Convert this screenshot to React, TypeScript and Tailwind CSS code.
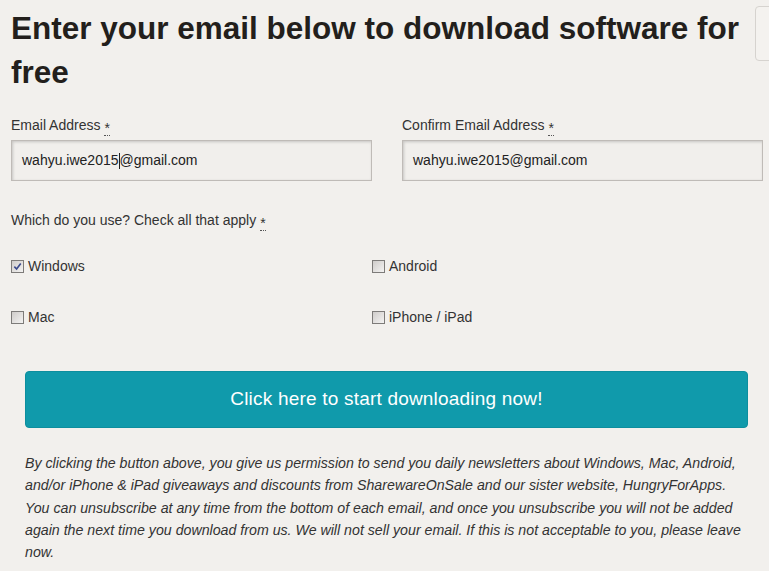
import React from 'react';

const Req: React.FC = () => (
  <abbr className="no-underline border-b border-dotted border-[#555] leading-none">*</abbr>
);

const Check: React.FC<{ checked?: boolean; label: string }> = ({ checked, label }) => (
  <label className="flex items-center gap-[4px] text-[14px] text-[#333]">
    <span className="w-[13px] h-[13px] border border-[#7d7b79] bg-gradient-to-br from-[#cfccca] to-[#f4f3f2] flex items-center justify-center">
      {checked && (
        <svg viewBox="0 0 10 10" className="w-[9px] h-[9px]">
          <path d="M1.5 5.2 L4 7.8 L8.6 1.6" fill="none" stroke="#3b4a8c" strokeWidth="1.8" />
        </svg>
      )}
    </span>
    {label}
  </label>
);

const Field: React.FC<{ label: string; value: string; caret?: number }> = ({ label, value, caret }) => (
  <div className="flex flex-col">
    <div className="text-[14px] text-[#333] h-[22px] flex items-end gap-[4px]">
      {label} <Req />
    </div>
    <div className="mt-[4px] h-[41px] border border-[#bfbbb7] bg-[#f1efec] shadow-[inset_1px_1px_3px_rgba(0,0,0,0.18)] flex items-center px-[10px] text-[14px] text-[#222]">
      {caret !== undefined ? (
        <>
          {value.slice(0, caret)}
          <span className="inline-block w-px h-[16px] bg-[#222]" />
          {value.slice(caret)}
        </>
      ) : (
        value
      )}
    </div>
  </div>
);

const App: React.FC = () => {
  return (
    <div className="w-[769px] h-[571px] overflow-hidden bg-[#f2f0ed] relative font-['Liberation_Sans',Arial,sans-serif]">
      <div className="absolute left-[755px] top-[6px] w-[30px] h-[55px] border border-[#d6d3cf] rounded-[4px] bg-[#f4f2ef]" />
      <div className="pl-[11px] pr-[7px]">
        <h1 className="pt-[6px] text-[31.5px] leading-[44px] font-bold text-[#231f1c] whitespace-nowrap">
          Enter your email below to download software for
          <br />
          free
        </h1>
        <div className="mt-[20px] grid grid-cols-[361px_361px] gap-x-[30px]">
          <Field label="Email Address" value="wahyu.iwe2015@gmail.com" caret={13} />
          <Field label="Confirm Email Address" value="wahyu.iwe2015@gmail.com" />
        </div>
        <div className="mt-[29px] text-[14px] text-[#333] flex items-end gap-[4px]">
          Which do you use? Check all that apply <Req />
        </div>
        <div className="mt-[25px] grid grid-cols-[361px_361px] gap-y-[30px]">
          <Check checked label="Windows" />
          <Check label="Android" />
          <Check label="Mac" />
          <Check label="iPhone / iPad" />
        </div>
      </div>
      <div className="pl-[25px] pr-[21px] mt-[43px]">
        <button className="w-full h-[57px] rounded-[4px] bg-[#109aab] text-white text-[19px] tracking-[0.2px] border border-[#0d8e9e]">
          Click here to start downloading now!
        </button>
        <p className="mt-[24px] text-[14.2px] leading-[22.3px] italic text-[#333] whitespace-nowrap">
          By clicking the button above, you give us permission to send you daily newsletters about Windows, Mac, Android,
          <br />
          and/or iPhone &amp; iPad giveaways and discounts from SharewareOnSale and our sister website, HungryForApps.
          <br />
          You can unsubscribe at any time from the bottom of each email, and once you unsubscribe you will not be added
          <br />
          again the next time you download from us. We will not sell your email. If this is not acceptable to you, please leave
          <br />
          now.
        </p>
      </div>
    </div>
  );
};

export default App;
